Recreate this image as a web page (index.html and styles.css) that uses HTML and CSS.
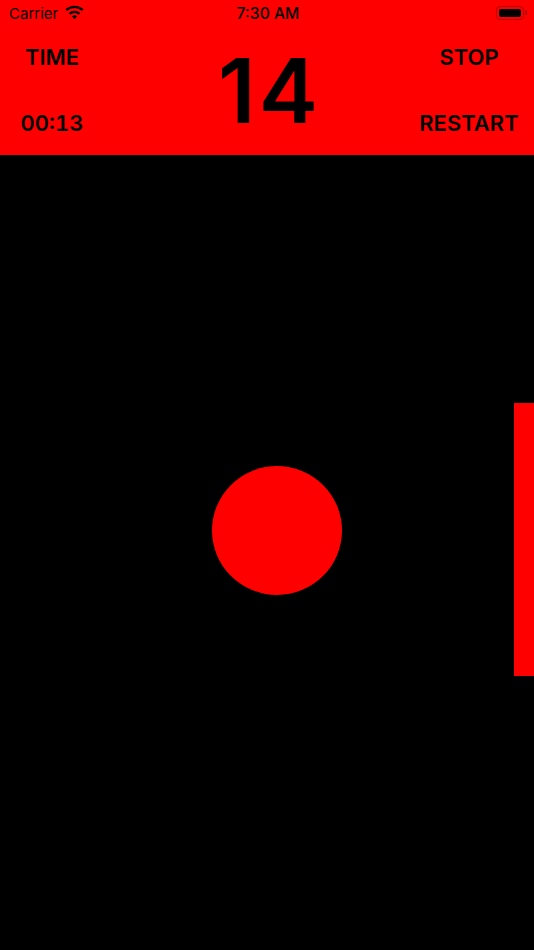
FILE: index.html
```html
<!DOCTYPE html>
<html lang="en">
<head>
    <meta charset="UTF-8">
    <meta name="viewport" content="width=device-width, initial-scale=1.0">
    <title>Game</title>
    <link rel="stylesheet" href="styles.css">
</head>
<body>
    <div class="header">
        <div class="status-bar">
            <div class="status-left">
                <span class="carrier">Carrier</span>
                <svg class="wifi" width="19" height="15" viewBox="0 0 19 15">
                    <path class="wifi-arc" d="M1.200 5.200A12 12 0 0 1 17.800 5.200"/>
                    <path class="wifi-arc" d="M4.500 8.800A7.200 7.200 0 0 1 14.500 8.800"/>
                    <path d="M9.500 10.300c-1 0-1.900.4-2.500 1.100l2.500 2.900 2.500-2.900c-.6-.7-1.500-1.100-2.500-1.100z"/>
                </svg>
            </div>
            <span class="clock">7:30 AM</span>
            <div class="status-right">
                <div class="battery"><div class="battery-fill"></div></div>
                <div class="battery-cap"></div>
            </div>
        </div>
        <div class="score-row">
            <div class="col">
                <span class="label">TIME</span>
                <span class="label">00:13</span>
            </div>
            <div class="score">14</div>
            <div class="col">
                <span class="label">STOP</span>
                <span class="label">RESTART</span>
            </div>
        </div>
    </div>
    <div class="field">
        <div class="ball"></div>
        <div class="paddle"></div>
    </div>
</body>
</html>
```

FILE: styles.css
```css
*{
    padding: 0;
    margin: 0;
    box-sizing: border-box;
}
body{
    width: 534px;
    height: 950px;
    background-color: black;
    font-family: "Inter", "Liberation Sans", sans-serif;
    color: black;
    overflow: hidden;
    display: flex;
    flex-direction: column;
}
.header{
    height: 155px;
    background-color: #ff0000;
    display: flex;
    flex-direction: column;
}
.status-bar{
    height: 28px;
    display: grid;
    grid-template-columns: 1fr auto 1fr;
    align-items: center;
    padding: 1px 7px 0 9px;
}
.status-left{
    display: flex;
    align-items: center;
    gap: 7px;
}
.carrier{
    font-size: 15px;
}
.wifi{
    margin-top: -3px;
}
.wifi-arc{
    fill: none;
    stroke: black;
    stroke-width: 2.3;
}
.clock{
    font-size: 15.7px;
    font-weight: 500;
}
.status-right{
    display: flex;
    align-items: center;
    justify-content: flex-end;
    gap: 1px;
    margin-top: -2px;
}
.battery{
    width: 28px;
    height: 14px;
    border: 1px solid #b00000;
    border-radius: 4px;
    padding: 2px 2px;
}
.battery-fill{
    width: 100%;
    height: 100%;
    background-color: black;
    border-radius: 2px;
}
.battery-cap{
    width: 2px;
    height: 5px;
    background-color: #b00000;
}
.score-row{
    flex: 1;
    display: grid;
    grid-template-columns: 104px 1fr 130px;
}
.col{
    display: flex;
    flex-direction: column;
    align-items: center;
    justify-content: space-between;
    padding: 17px 0 18px;
}
.label{
    font-size: 22px;
    font-weight: 600;
    line-height: 28px;
    font-variant-numeric: tabular-nums;
}
.score{
    font-size: 89px;
    font-weight: 600;
    line-height: 129px;
    text-align: center;
    letter-spacing: 3px;
    padding-left: 31px;
}
.field{
    flex: 1;
    position: relative;
}
.ball{
    position: absolute;
    left: 212px;
    top: 311px;
    width: 130px;
    height: 129px;
    border-radius: 50%;
    background-color: #ff0000;
}
.paddle{
    position: absolute;
    left: 514px;
    top: 248px;
    width: 20px;
    height: 273px;
    background-color: #ff0000;
}
```
